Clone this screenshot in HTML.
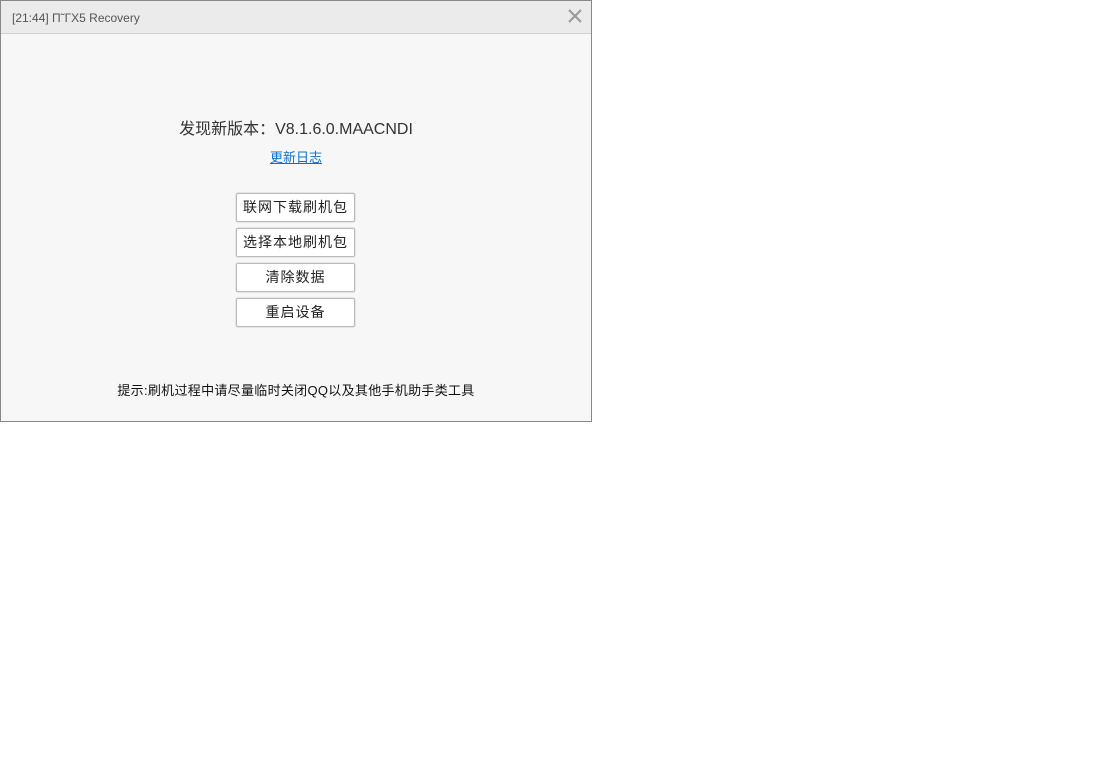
<!DOCTYPE html>
<html><head><meta charset="utf-8"><style>
body{margin:0;width:1108px;height:772px;background:#fff;position:relative;font-family:"Liberation Sans","Noto Sans CJK SC",sans-serif;}
.win{position:absolute;left:0;top:0;width:590px;height:420px;border:1px solid #888;background:#f7f7f7;}
.tb{position:absolute;left:0;top:0;width:590px;height:32px;background:#ebebeb;border-bottom:1px solid #d0d0d0;}
.tt{position:absolute;left:11px;top:10px;font-size:12px;color:#555;}
.x{position:absolute;left:567px;top:8px;}
.t{position:absolute;left:0;width:590px;text-align:center;}
.btn{position:absolute;left:235px;width:117px;height:27px;border:1px solid #bbb;border-radius:2px;background:#fff;font-size:14px;line-height:27px;text-align:center;color:#222;letter-spacing:1px;box-shadow:0 0 0 1px #e6e6e6;}
</style></head><body>
<div class="win">
<div class="tb"><div class="tt">[21:44] П˜ГХ5 Recovery</div>
<svg class="x" width="14" height="14" viewBox="0 0 14 14"><path d="M1 1L13 13M13 1L1 13" stroke="#999" stroke-width="2"/></svg></div>
<div class="t" style="top:114px;font-size:16px;color:#333;">发现新版本：V8.1.6.0.MAACNDI</div>
<div class="t" style="top:146px;font-size:13px;"><span style="color:#0a6fd6;text-decoration:underline;">更新日志</span></div>
<div class="btn" style="top:192px">联网下载刷机包</div>
<div class="btn" style="top:227px">选择本地刷机包</div>
<div class="btn" style="top:262px">清除数据</div>
<div class="btn" style="top:297px">重启设备</div>
<div class="t" style="top:379px;font-size:13px;color:#111;letter-spacing:0.3px;">提示:刷机过程中请尽量临时关闭QQ以及其他手机助手类工具</div>
</div>
</body></html>
